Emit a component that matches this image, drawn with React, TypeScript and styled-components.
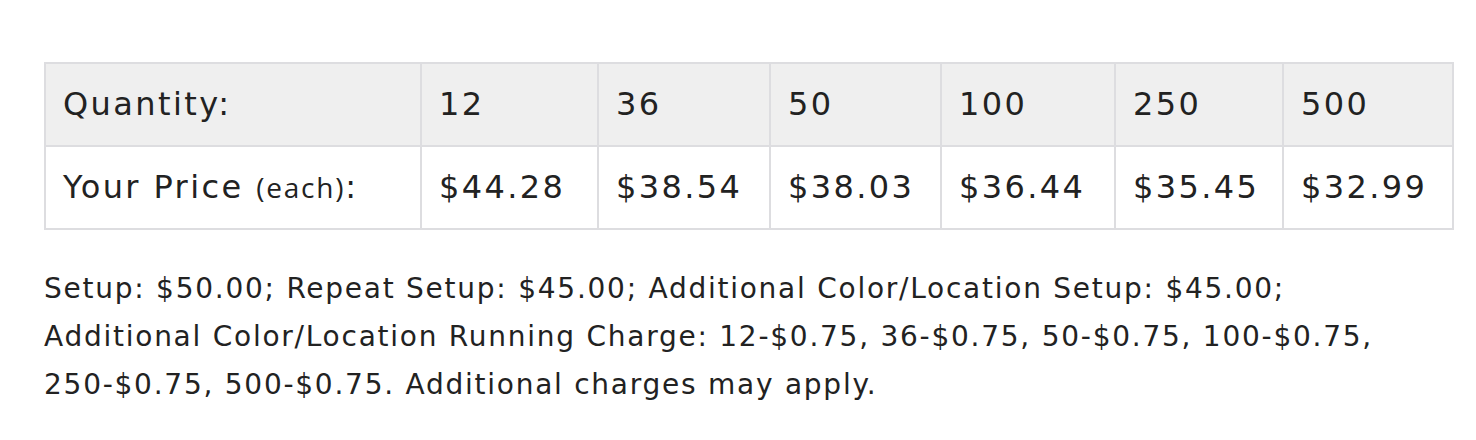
import React from "react";
import styled, { createGlobalStyle } from "styled-components";

const Global = createGlobalStyle`
  html, body { margin: 0; padding: 0; background: #fff; }
  body { font-family: "DejaVu Sans", "Open Sans", sans-serif; color: #222; }
`;

const Page = styled.div`
  padding: 62px 24px 0 44px;
  width: 1408px;
`;

const Table = styled.table`
  width: 1408px;
  border-collapse: collapse;
  table-layout: fixed;
  border: 2px solid #dddde0;
`;

const Row = styled.tr<{ $head?: boolean }>`
  background: ${(p) => (p.$head ? "#efefef" : "#fff")};
  height: 83px;
`;

const Cell = styled.td`
  border: 2px solid #dddde0;
  padding: 0 0 2px 17px;
  font-size: 32px;
  letter-spacing: 2.4px;
  color: #222;
  white-space: nowrap;
  vertical-align: middle;
`;

const Small = styled.span`
  font-family: "Open Sans", sans-serif;
  font-size: 28px;
  letter-spacing: 1.8px;
`;

const Note = styled.p`
  margin: 35px 0 0;
  font-size: 28px;
  letter-spacing: 1.75px;
  line-height: 48px;
  color: #222;
  white-space: nowrap;
`;

const widths = [376, 177, 172, 171, 174, 168, 170];
const qty = ["12", "36", "50", "100", "250", "500"];
const prices = ["$44.28", "$38.54", "$38.03", "$36.44", "$35.45", "$32.99"];

export default function App() {
  return (
    <>
      <Global />
      <Page>
        <Table>
          <colgroup>
            {widths.map((w, i) => (
              <col key={i} style={{ width: w }} />
            ))}
          </colgroup>
          <tbody>
            <Row $head>
              <Cell>Quantity:</Cell>
              {qty.map((q) => (
                <Cell key={q}>{q}</Cell>
              ))}
            </Row>
            <Row>
              <Cell>
                Your Price <Small>(each)</Small>:
              </Cell>
              {prices.map((p) => (
                <Cell key={p}>{p}</Cell>
              ))}
            </Row>
          </tbody>
        </Table>
        <Note>
          Setup: $50.00; Repeat Setup: $45.00; Additional Color/Location Setup: $45.00;
          <br />
          Additional Color/Location Running Charge: 12-$0.75, 36-$0.75, 50-$0.75, 100-$0.75,
          <br />
          250-$0.75, 500-$0.75. Additional charges may apply.
        </Note>
      </Page>
    </>
  );
}
